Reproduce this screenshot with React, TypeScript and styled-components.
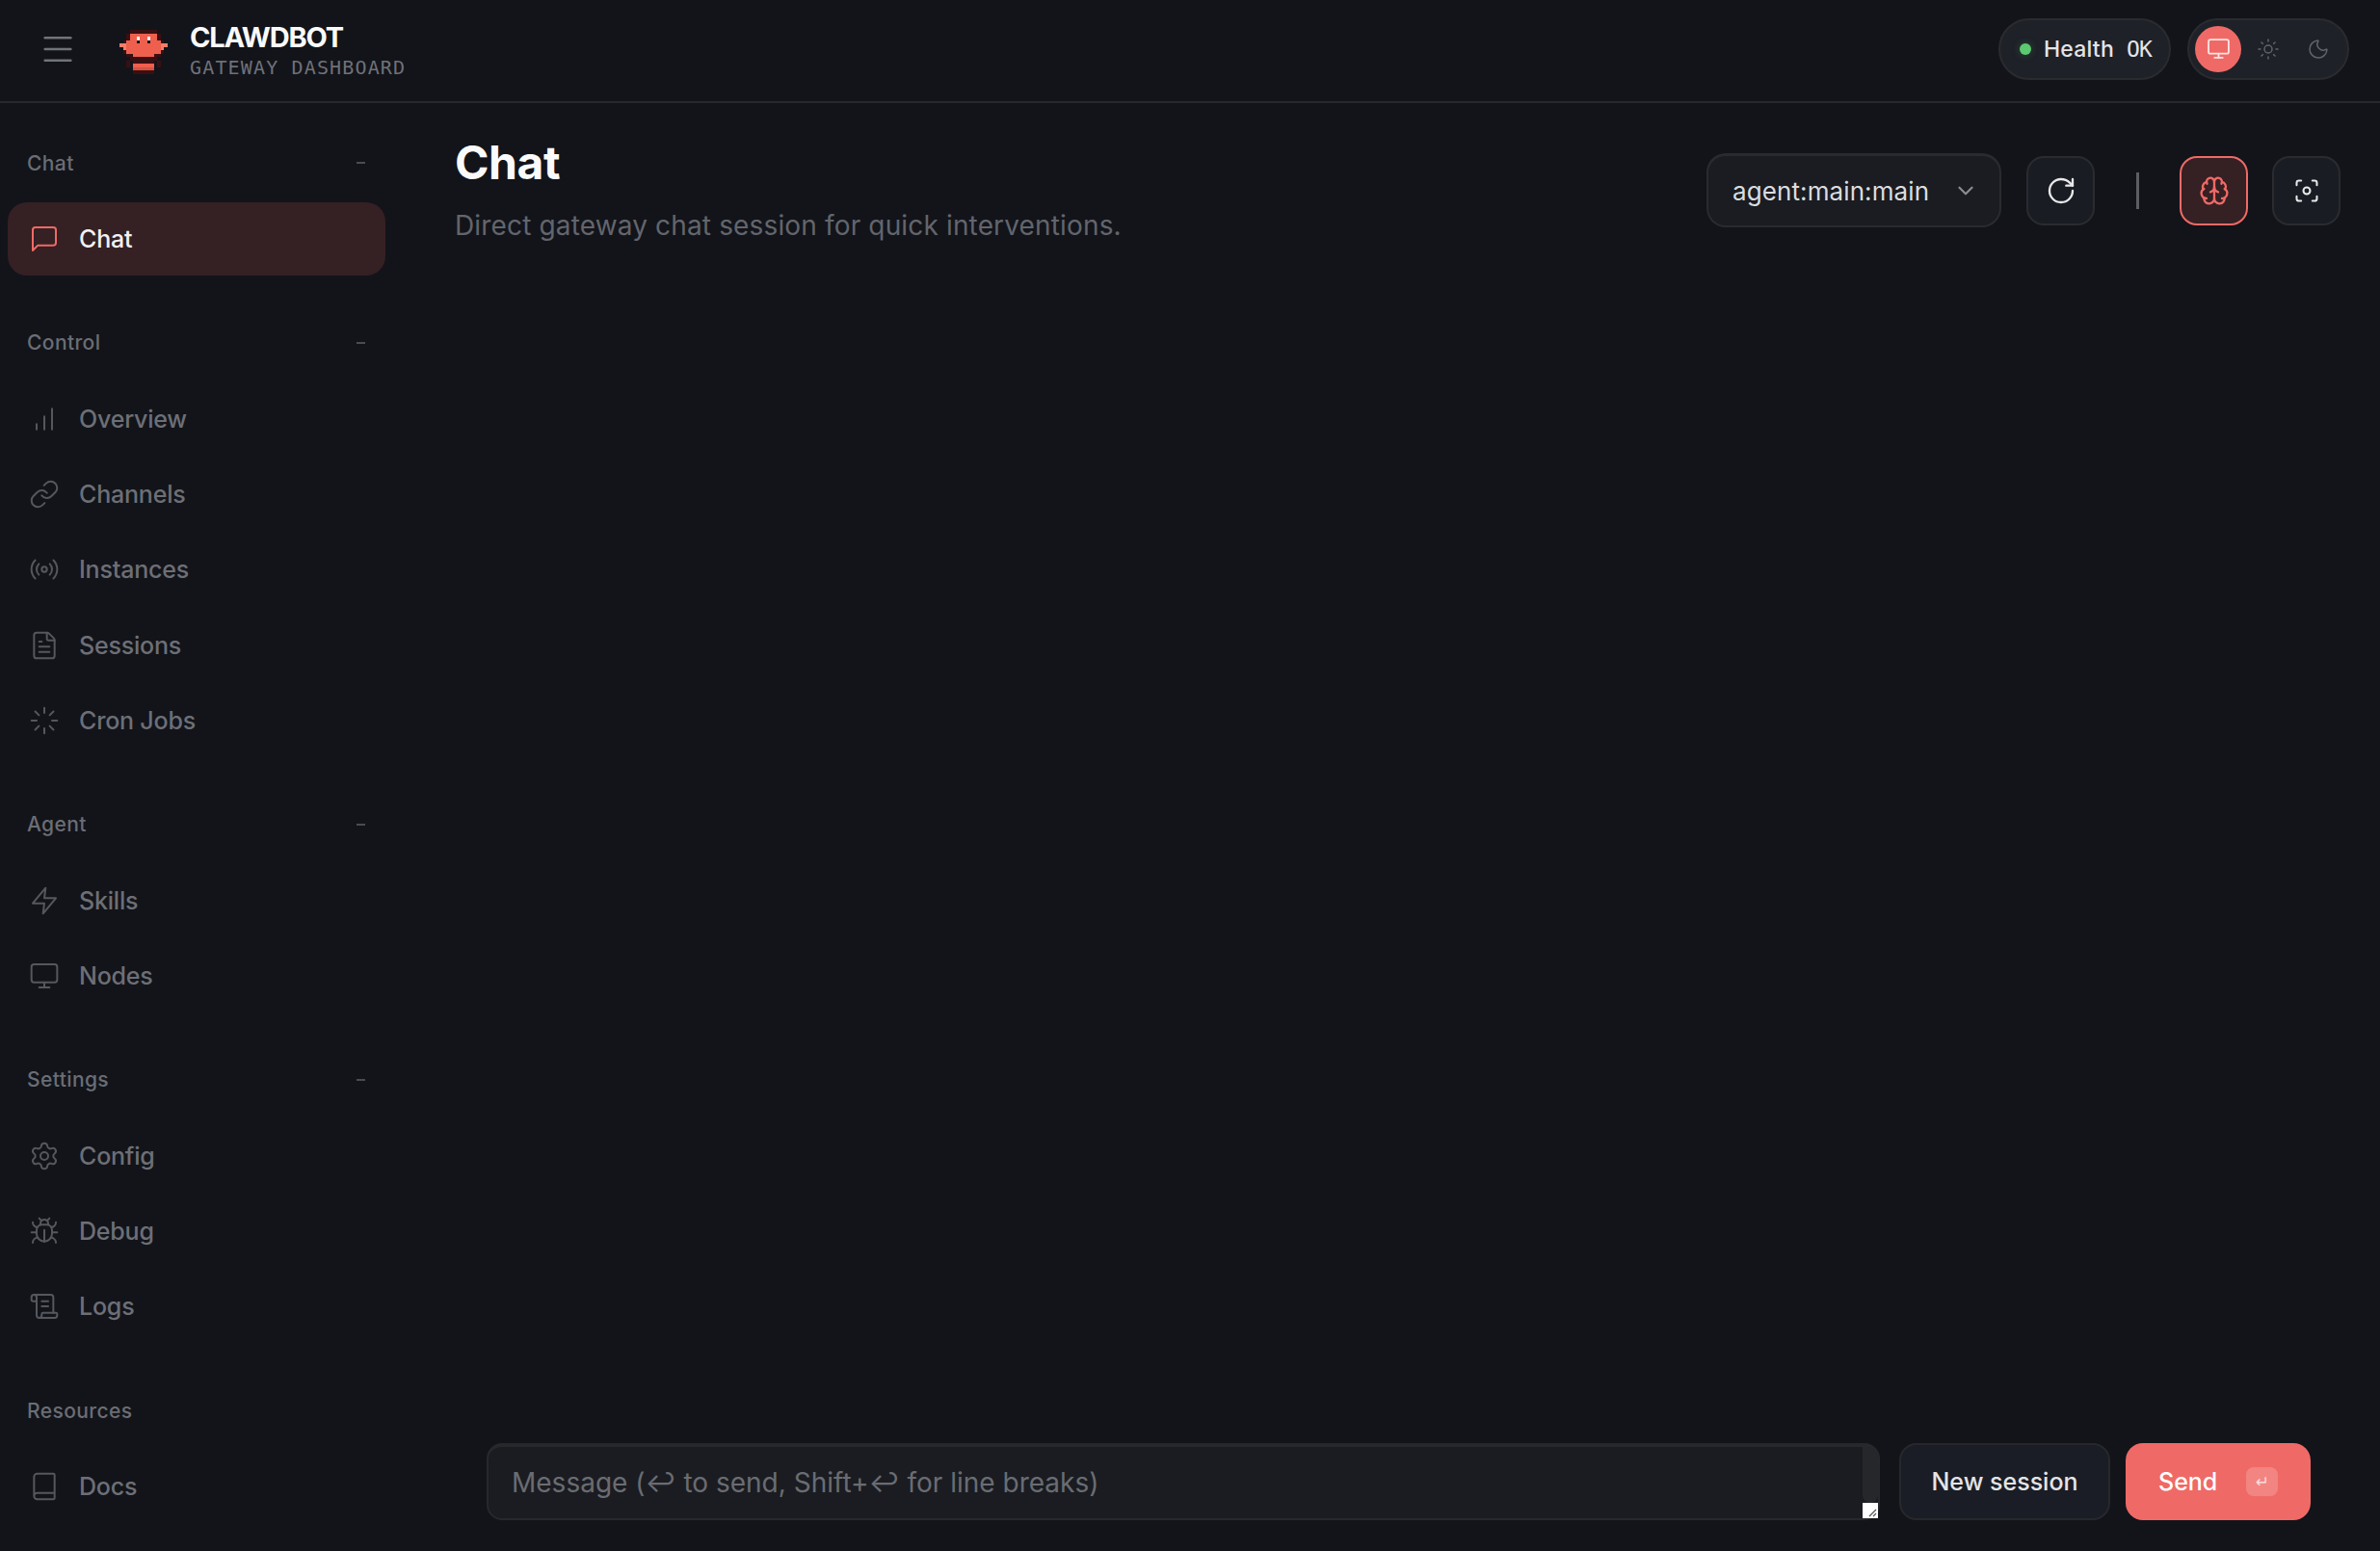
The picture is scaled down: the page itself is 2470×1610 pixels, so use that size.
import React from "react";
import styled, { createGlobalStyle } from "styled-components";
import {
  Book, Brain, Bug, ChevronDown, FileText, Focus, Link, Loader, Menu,
  Monitor, Moon, Radio, RotateCw, ScrollText, Settings, Sun,
} from "lucide-react";

const FONT = `"Inter", "Noto Sans", sans-serif`;
const MONO = `"DejaVu Sans Mono", "Liberation Mono", monospace`;

const Global = createGlobalStyle`
  html, body { margin: 0; padding: 0; background: #12141a; }
  * { box-sizing: border-box; }
  body { font-family: ${FONT}; color: #e4e4e7; }
`;

const Shell = styled.div`
  width: 2470px; height: 1610px; display: grid;
  grid-template-rows: 107px 1fr; grid-template-columns: 408px 1fr;
  background: #12141a; overflow: hidden;
`;
const Topbar = styled.header`
  grid-column: 1 / 3; display: flex; align-items: center; justify-content: space-between;
  border-bottom: 2px solid #26282c; padding: 0 32px 0 46px;
`;
const TopLeft = styled.div`display: flex; align-items: center;`;
const MenuButton = styled.span`display: flex; color: #71737a; margin: -3px 44px 0 -6px;`;
const LogoMark = styled.span`display: flex; margin-top: 3px;`;
const Brand = styled.div`display: flex; flex-direction: column; margin-left: 23px; margin-top: -2px;`;
const BrandName = styled.div`
  font-size: 29px; font-weight: 700; line-height: 34px; color: #fafafa; letter-spacing: -1.2px;
`;
const BrandSub = styled.div`
  font-family: ${MONO}; font-size: 20px; font-weight: 400; line-height: 22px; color: #6f7178; letter-spacing: 1.15px;
  margin-top: 3px;
`;
const TopRight = styled.div`display: flex; align-items: center; gap: 17px; margin-top: -4px;`;
const Pill = styled.div`
  height: 64px; border-radius: 32px; background: #1e2128; border: 2px solid #2a2b2f;
  display: flex; align-items: center;
`;
const HealthPill = styled(Pill)`width: 179px; padding-left: 20px; gap: 13px;`;
const Dot = styled.span`
  width: 12px; height: 12px; border-radius: 50%; background: #5cc86f; box-shadow: 0 0 8px #5cc86f40;
`;
const HealthText = styled.span`
  font-size: 23px; font-weight: 500; color: #e4e4e7; display: flex; align-items: center; gap: 13px; letter-spacing: 0.2px;
`;
const HealthValue = styled.span`font-family: ${MONO}; font-size: 23px; font-weight: 400; letter-spacing: -0.8px;`;
const ThemePill = styled(Pill)`width: 168px; padding-left: 6px;`;
const ThemeButton = styled.span<{ $active?: boolean }>`
  width: 48px; height: 48px; border-radius: 50%; display: flex; align-items: center; justify-content: center;
  background: ${(p) => (p.$active ? "#ef6a66" : "transparent")};
  color: ${(p) => (p.$active ? "#fbe5e3" : "#62646b")};
  margin-right: 4px;
`;

const Sidebar = styled.nav`
  display: flex; flex-direction: column; padding: 48px 8px 0 8px; gap: 55.6px;
`;
const Section = styled.section`display: flex; flex-direction: column; gap: 2.4px;`;
const SectionHead = styled.div`
  height: 28px; margin-bottom: 24.6px; padding: 0 20px; display: flex; align-items: center; justify-content: space-between;
  font-size: 21px; font-weight: 500; color: #6b6d74; letter-spacing: 0.4px;
`;
const Collapse = styled.span`width: 9px; height: 2px; background: #4a4c52; margin-right: 1px;`;
const NavItem = styled.a<{ $active?: boolean }>`
  height: 76px; width: 392px; border-radius: 20px; display: flex; align-items: center; padding-left: 22px; gap: 20px;
  flex: none;
  background: ${(p) => (p.$active ? "#352024" : "transparent")};
  color: ${(p) => (p.$active ? "#ef6a66" : "#55575e")};
`;
const NavLabel = styled.span<{ $active?: boolean }>`
  font-size: 25px; font-weight: 500; letter-spacing: -0.2px;
  color: ${(p) => (p.$active ? "#f2f2f3" : "#6d6f76")};
`;

const Main = styled.main`
  display: flex; flex-direction: column; padding: 0 41px 32px 64px; min-height: 0;
`;
const PageHead = styled.div`display: flex; justify-content: space-between; align-items: flex-start; padding-top: 26px;`;
const Titles = styled.div`display: flex; flex-direction: column;`;
const Title = styled.h1`
  margin: 0; font-size: 48px; line-height: 72px; font-weight: 700; color: #fafafa; letter-spacing: -0.4px;
`;
const Subtitle = styled.p`
  margin: 1px 0 0; font-size: 28px; line-height: 56px; color: #63656c; letter-spacing: 0.15px;
`;
const Actions = styled.div`display: flex; align-items: center; margin-top: 26px;`;
const SelectBox = styled.div`
  width: 306px; height: 77px; border-radius: 20px; background: #1a1c21; border: 2px solid #2a2b2f;
  border-top-width: 3px;
  display: flex; align-items: center; justify-content: space-between; padding: 0 22px 0 25px;
  font-size: 26px; color: #dcdcdf; letter-spacing: 0.1px;
`;
const Chevron = styled.span`display: flex; color: #8a8c92;`;
const IconButton = styled.span<{ $active?: boolean }>`
  width: 71px; height: 72px; border-radius: 18px; display: flex; align-items: center; justify-content: center;
  background: ${(p) => (p.$active ? "#352024" : "#191c23")};
  border: 2px solid ${(p) => (p.$active ? "#ef6a66" : "#2a2b2f")};
  color: ${(p) => (p.$active ? "#ef6a66" : "#e8e8ea")};
`;
const RefreshButton = styled(IconButton)`margin-left: 26px;`;
const FocusButton = styled(IconButton)`margin-left: 25px;`;
const Divider = styled.span`width: 3px; height: 38px; background: #5b5d63; margin: 0 42px 0 43px;`;
const Spacer = styled.div`flex: 1;`;
const Composer = styled.form`
  display: flex; align-items: stretch; margin: 0 31px 0 33px; height: 80px; gap: 16px;
`;
const MessageWrap = styled.div`position: relative; flex: 1; margin-right: 4px;`;
const MessageBox = styled.textarea`
  display: block; width: 100%; height: 80px; resize: none; border-radius: 16px; background: #1a1c21; border: 2px solid #27282c;
  border-top-width: 4px; padding: 19px 24px; outline: none;
  font-family: ${FONT}; font-size: 28px; line-height: 36px; color: #dcdcdf; overflow: hidden;
  &::placeholder { color: #6a6c72; letter-spacing: 0; }
`;
const ScrollTrack = styled.span`
  position: absolute; top: 4px; right: 2px; width: 16px; height: 58px; background: #26272a;
  border-radius: 0 10px 8px 8px;
`;
const Resizer = styled.span`
  position: absolute; bottom: 2px; right: 2px; width: 16px; height: 16px; background: #fff; display: flex;
`;
const SessionButton = styled.button`
  width: 219px; border-radius: 18px; background: #1a1d25; border: 2px solid #27282c;
  font-family: ${FONT}; font-size: 25px; font-weight: 500; color: #e4e4e7;
`;
const SendButton = styled.button`
  width: 192px; border-radius: 18px; background: #ef6a66; border: 0; color: #fff;
  font-family: ${FONT}; font-size: 25px; font-weight: 500;
  display: flex; align-items: center; padding: 0 0 0 34px; gap: 30px;
`;
const Kbd = styled.span`
  width: 33px; height: 30px; border-radius: 8px; background: #f28581; color: #fbdcda;
  font-size: 17px; display: flex; align-items: center; justify-content: center;
  font-family: "DejaVu Sans", sans-serif;
`;

const LobsterLogo = () => {
  const red = "#ef5f4e", dark = "#3a0f12", salmon = "#f0806a";
  const rows: [number, number, number, number, string][] = [
    [3, 0, 8, 1, dark],
    [2, 1, 1, 1, dark], [3, 1, 8, 1, red], [11, 1, 1, 1, dark],
    [2, 2, 1, 1, dark], [3, 2, 8, 1, red], [11, 2, 1, 1, dark],
    [1, 3, 1, 1, dark], [2, 3, 10, 1, red], [12, 3, 1, 1, dark],
    [0, 4, 2, 1, salmon], [2, 4, 10, 1, red], [12, 4, 2, 1, salmon],
    [1, 5, 1, 1, salmon], [2, 5, 10, 1, red], [12, 5, 1, 1, salmon],
    [1, 6, 1, 1, dark], [2, 6, 10, 1, red], [12, 6, 1, 1, dark],
    [2, 7, 2, 1, dark], [4, 7, 6, 1, red], [10, 7, 2, 1, dark],
    [3, 8, 8, 1, dark],
    [4, 9, 6, 1, dark], [2, 9, 1, 1, dark], [11, 9, 1, 1, dark],
    [4, 10, 6, 1, red], [2, 10, 1, 1, dark], [11, 10, 1, 1, dark],
    [4, 11, 6, 1, "#d9503f"], [4, 12, 6, 1, dark],
    [5, 2, 1, 1, "#ffffff"], [8, 2, 1, 1, "#ffffff"],
    [5, 3, 1, 1, "#14090a"], [8, 3, 1, 1, "#14090a"],
  ];
  return (
    <svg width="50" height="46" viewBox="0 0 14 13" shapeRendering="crispEdges" aria-hidden="true">
      {rows.map(([x, y, w, h, c], i) => <rect key={i} x={x} y={y} width={w} height={h} fill={c} />)}
    </svg>
  );
};

const IconSvg = ({ children }: { children: React.ReactNode }) => (
  <svg width="32" height="32" viewBox="0 0 24 24" fill="none" stroke="currentColor" strokeWidth="1.5" strokeLinecap="round" strokeLinejoin="round" aria-hidden="true">
    {children}
  </svg>
);
const ChatIcon = () => <IconSvg><path d="M21 15a2 2 0 0 1-2 2H7l-4 4V5a2 2 0 0 1 2-2h14a2 2 0 0 1 2 2z" /></IconSvg>;
const BarsIcon = () => <IconSvg><path d="M6 20v-4" /><path d="M12 20V10" /><path d="M18 20V4" /></IconSvg>;
const BoltIcon = () => <IconSvg><path d="M13 2 3 14h9l-1 8 10-12h-9l1-8z" /></IconSvg>;
const lucide = (I: React.ComponentType<any>) => () => <I size={32} strokeWidth={1.5} />;

type Item = { label: string; icon: React.ComponentType<any>; active?: boolean };
const sections: { title: string; collapsible: boolean; items: Item[] }[] = [
  { title: "Chat", collapsible: true, items: [{ label: "Chat", icon: ChatIcon, active: true }] },
  { title: "Control", collapsible: true, items: [
    { label: "Overview", icon: BarsIcon }, { label: "Channels", icon: lucide(Link) },
    { label: "Instances", icon: lucide(Radio) }, { label: "Sessions", icon: lucide(FileText) }, { label: "Cron Jobs", icon: lucide(Loader) },
  ] },
  { title: "Agent", collapsible: true, items: [{ label: "Skills", icon: BoltIcon }, { label: "Nodes", icon: lucide(Monitor) }] },
  { title: "Settings", collapsible: true, items: [
    { label: "Config", icon: lucide(Settings) }, { label: "Debug", icon: lucide(Bug) }, { label: "Logs", icon: lucide(ScrollText) },
  ] },
  { title: "Resources", collapsible: false, items: [{ label: "Docs", icon: lucide(Book) }] },
];

export default function App() {
  return (
    <Shell>
      <Global />
      <Topbar>
        <TopLeft>
          <MenuButton><Menu size={40} strokeWidth={1.5} /></MenuButton>
          <LogoMark><LobsterLogo /></LogoMark>
          <Brand>
            <BrandName>CLAWDBOT</BrandName>
            <BrandSub>GATEWAY DASHBOARD</BrandSub>
          </Brand>
        </TopLeft>
        <TopRight>
          <HealthPill>
            <Dot />
            <HealthText><span>Health</span><HealthValue>OK</HealthValue></HealthText>
          </HealthPill>
          <ThemePill>
            <ThemeButton $active><Monitor size={25} strokeWidth={1.75} /></ThemeButton>
            <ThemeButton><Sun size={24} strokeWidth={1.5} /></ThemeButton>
            <ThemeButton><Moon size={24} strokeWidth={1.5} /></ThemeButton>
          </ThemePill>
        </TopRight>
      </Topbar>
      <Sidebar>
        {sections.map((s) => (
          <Section key={s.title}>
            <SectionHead>
              <span>{s.title}</span>
              {s.collapsible && <Collapse />}
            </SectionHead>
            {s.items.map((it) => (
              <NavItem key={it.label} $active={it.active}>
                <it.icon />
                <NavLabel $active={it.active}>{it.label}</NavLabel>
              </NavItem>
            ))}
          </Section>
        ))}
      </Sidebar>
      <Main>
        <PageHead>
          <Titles>
            <Title>Chat</Title>
            <Subtitle>Direct gateway chat session for quick interventions.</Subtitle>
          </Titles>
          <Actions>
            <SelectBox>
              <span>agent:main:main</span>
              <Chevron><ChevronDown size={26} strokeWidth={2} /></Chevron>
            </SelectBox>
            <RefreshButton><RotateCw size={32} strokeWidth={1.75} /></RefreshButton>
            <Divider />
            <IconButton $active><Brain size={32} strokeWidth={1.75} /></IconButton>
            <FocusButton><Focus size={28} strokeWidth={1.75} /></FocusButton>
          </Actions>
        </PageHead>
        <Spacer />
        <Composer>
          <MessageWrap>
            <MessageBox placeholder="Message (↩ to send, Shift+↩ for line breaks)" />
            <ScrollTrack />
            <Resizer>
              <svg width="16" height="16" viewBox="0 0 16 16" stroke="#555" strokeWidth="1.2" aria-hidden="true">
                <path d="M7 14 14 7" /><path d="M11 14 14 11" />
              </svg>
            </Resizer>
          </MessageWrap>
          <SessionButton type="button">New session</SessionButton>
          <SendButton type="button">Send<Kbd>↵</Kbd></SendButton>
        </Composer>
      </Main>
    </Shell>
  );
}
